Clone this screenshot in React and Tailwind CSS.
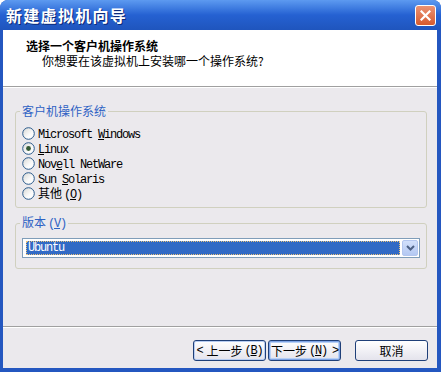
import React from "react";

const CJK = "'Noto Sans CJK SC', 'Liberation Sans', sans-serif";
const MONO = "'Liberation Mono', 'Noto Sans CJK SC', monospace";

function Mono({ children, className = "" }) {
  return (
    <span className={`tracking-[-1.2px] ${className}`} style={{ fontFamily: MONO }}>
      {children}
    </span>
  );
}

function Radio({ checked }) {
  return (
    <svg width="13" height="13" viewBox="0 0 13 13" className="shrink-0">
      <defs>
        <linearGradient id="radioFill" x1="0" y1="0" x2="1" y2="1">
          <stop offset="0" stopColor="#d6d6d2" />
          <stop offset="0.6" stopColor="#fbfbfb" />
          <stop offset="1" stopColor="#ffffff" />
        </linearGradient>
      </defs>
      <circle cx="6.5" cy="6.5" r="5.8" fill="url(#radioFill)" stroke="#2a5a8c" strokeWidth="1" />
      {checked && <circle cx="6.5" cy="6.5" r="2.4" fill="#345a34" />}
    </svg>
  );
}

function RadioRow({ checked, children }) {
  return (
    <div className="flex items-center gap-[3px] h-[15px] text-[12px] text-black">
      <Radio checked={checked} />
      <span className="leading-[13px]">{children}</span>
    </div>
  );
}

function XpButton({ children, isDefault, hover }) {
  let ring = "";
  if (isDefault) ring = "shadow-[inset_0_0_0_1px_#7fa4e6,inset_0_0_0_2px_#b8d0f5]";
  else if (hover) ring = "shadow-[inset_0_0_0_1px_#b8cdf2]";
  return (
    <div
      className={`w-[73px] h-[21px] rounded-[3px] border border-[#1f3f78] bg-linear-to-b from-white to-[#e4e3ec] flex items-center justify-center text-[12px] text-black leading-none ${ring}`}
    >
      {children}
    </div>
  );
}

export default function App() {
  return (
    <div className="w-[441px] h-[372px] bg-white">
      <div
        className="w-[441px] h-[372px] flex flex-col rounded-t-[8px] bg-[#2457c0]"
        style={{ fontFamily: CJK }}
      >
        {/* title bar */}
        <div className="h-[30px] shrink-0 flex items-center justify-between pl-[6px] pr-[5px] rounded-t-[8px] bg-linear-to-b from-[#5d9af0] via-[#2561d2] to-[#1f55bd]">
          <span className="text-white font-bold text-[16px] tracking-[1.3px] leading-none [text-shadow:1px_1px_0_#0c2a78]">
            新建虚拟机向导
          </span>
          <div className="w-[21px] h-[21px] rounded-[3px] border border-white bg-linear-to-b from-[#ea9273] to-[#d65a2c] flex items-center justify-center">
            <svg width="11" height="11" viewBox="0 0 11 11">
              <path d="M1.5 1.5 L9.5 9.5 M9.5 1.5 L1.5 9.5" stroke="white" strokeWidth="2.2" strokeLinecap="square" />
            </svg>
          </div>
        </div>

        {/* client area */}
        <div className="flex-1 flex flex-col ml-[3px] mr-[4px] mb-[4px] bg-[#ebe9ed] overflow-hidden">
          <div className="h-[56px] shrink-0 bg-white pt-[9px] pl-[23px]">
            <div className="text-[12px] font-bold leading-[13px] text-black">选择一个客户机操作系统</div>
            <div className="mt-[2px] text-[12px] leading-[13px] text-black pl-[16px]">
              你想要在该虚拟机上安装哪一个操作系统?
            </div>
          </div>
          <div className="h-[1px] bg-[#a0a0a0]" />
          <div className="h-[1px] bg-white" />

          <div className="flex-1 flex flex-col">
            <div className="pt-[16px] pl-[12px] pr-[10px]">
              <fieldset className="border border-[#d0d0bf] rounded-[3px] px-[6px] pt-[8px] pb-[6px]">
                <legend className="ml-[-2px] px-[2px] text-[12px] leading-[14px] text-[#2e62c4]">
                  客户机操作系统
                </legend>
                <RadioRow>
                  <Mono>Microsoft <span className="underline">W</span>indows</Mono>
                </RadioRow>
                <RadioRow checked>
                  <Mono><span className="underline">L</span>inux</Mono>
                </RadioRow>
                <RadioRow>
                  <Mono>Nov<span className="underline">e</span>ll NetWare</Mono>
                </RadioRow>
                <RadioRow>
                  <Mono>Sun <span className="underline">S</span>olaris</Mono>
                </RadioRow>
                <RadioRow>
                  其他<Mono className="ml-[2px]">(<span className="underline">O</span>)</Mono>
                </RadioRow>
              </fieldset>

              <fieldset className="mt-[7px] border border-[#d0d0bf] rounded-[3px] px-[6px] pt-[7px] pb-[10px]">
                <legend className="ml-[-2px] px-[2px] text-[12px] leading-[14px] text-[#2e62c4]">
                  版本<Mono className="ml-[2px]">(<span className="underline">V</span>)</Mono>
                </legend>
                <div className="h-[20px] border border-[#7f9db9] bg-white flex items-stretch p-[1px]">
                  <div className="flex-1 flex items-stretch py-[1px] pl-[2px] pr-[2px]">
                    <div className="flex-1 bg-[#316ac5] border border-dotted border-[#e9c27a] flex items-center pl-[1px]">
                      <Mono className="text-white text-[12px] leading-none">Ubuntu</Mono>
                    </div>
                  </div>
                  <div className="w-[16px] rounded-[2px] border border-[#b3c6ef] bg-linear-to-b from-[#d2e0fb] to-[#b4c8f2] flex items-center justify-center">
                    <svg width="9" height="6" viewBox="0 0 9 6">
                      <path d="M1 1 L4.5 4.5 L8 1" fill="none" stroke="#4d6185" strokeWidth="2" />
                    </svg>
                  </div>
                </div>
              </fieldset>
            </div>

            <div className="flex-1" />
            <div className="h-[1px] bg-[#a0a0a0]" />
            <div className="h-[1px] bg-white" />
            <div className="h-[40px] shrink-0 flex items-start justify-end pt-[12px] pr-[9px]">
              <div className="flex gap-[2px]">
                <XpButton hover>
                  <Mono className="mr-[4px]">&lt;</Mono>上一步<Mono className="ml-[2px]">(<span className="underline">B</span>)</Mono>
                </XpButton>
                <XpButton isDefault>
                  下一步<Mono className="ml-[2px]">(<span className="underline">N</span>)</Mono><Mono className="ml-[5px]">&gt;</Mono>
                </XpButton>
              </div>
              <div className="ml-[14px]">
                <XpButton>取消</XpButton>
              </div>
            </div>
          </div>
        </div>
      </div>
    </div>
  );
}
